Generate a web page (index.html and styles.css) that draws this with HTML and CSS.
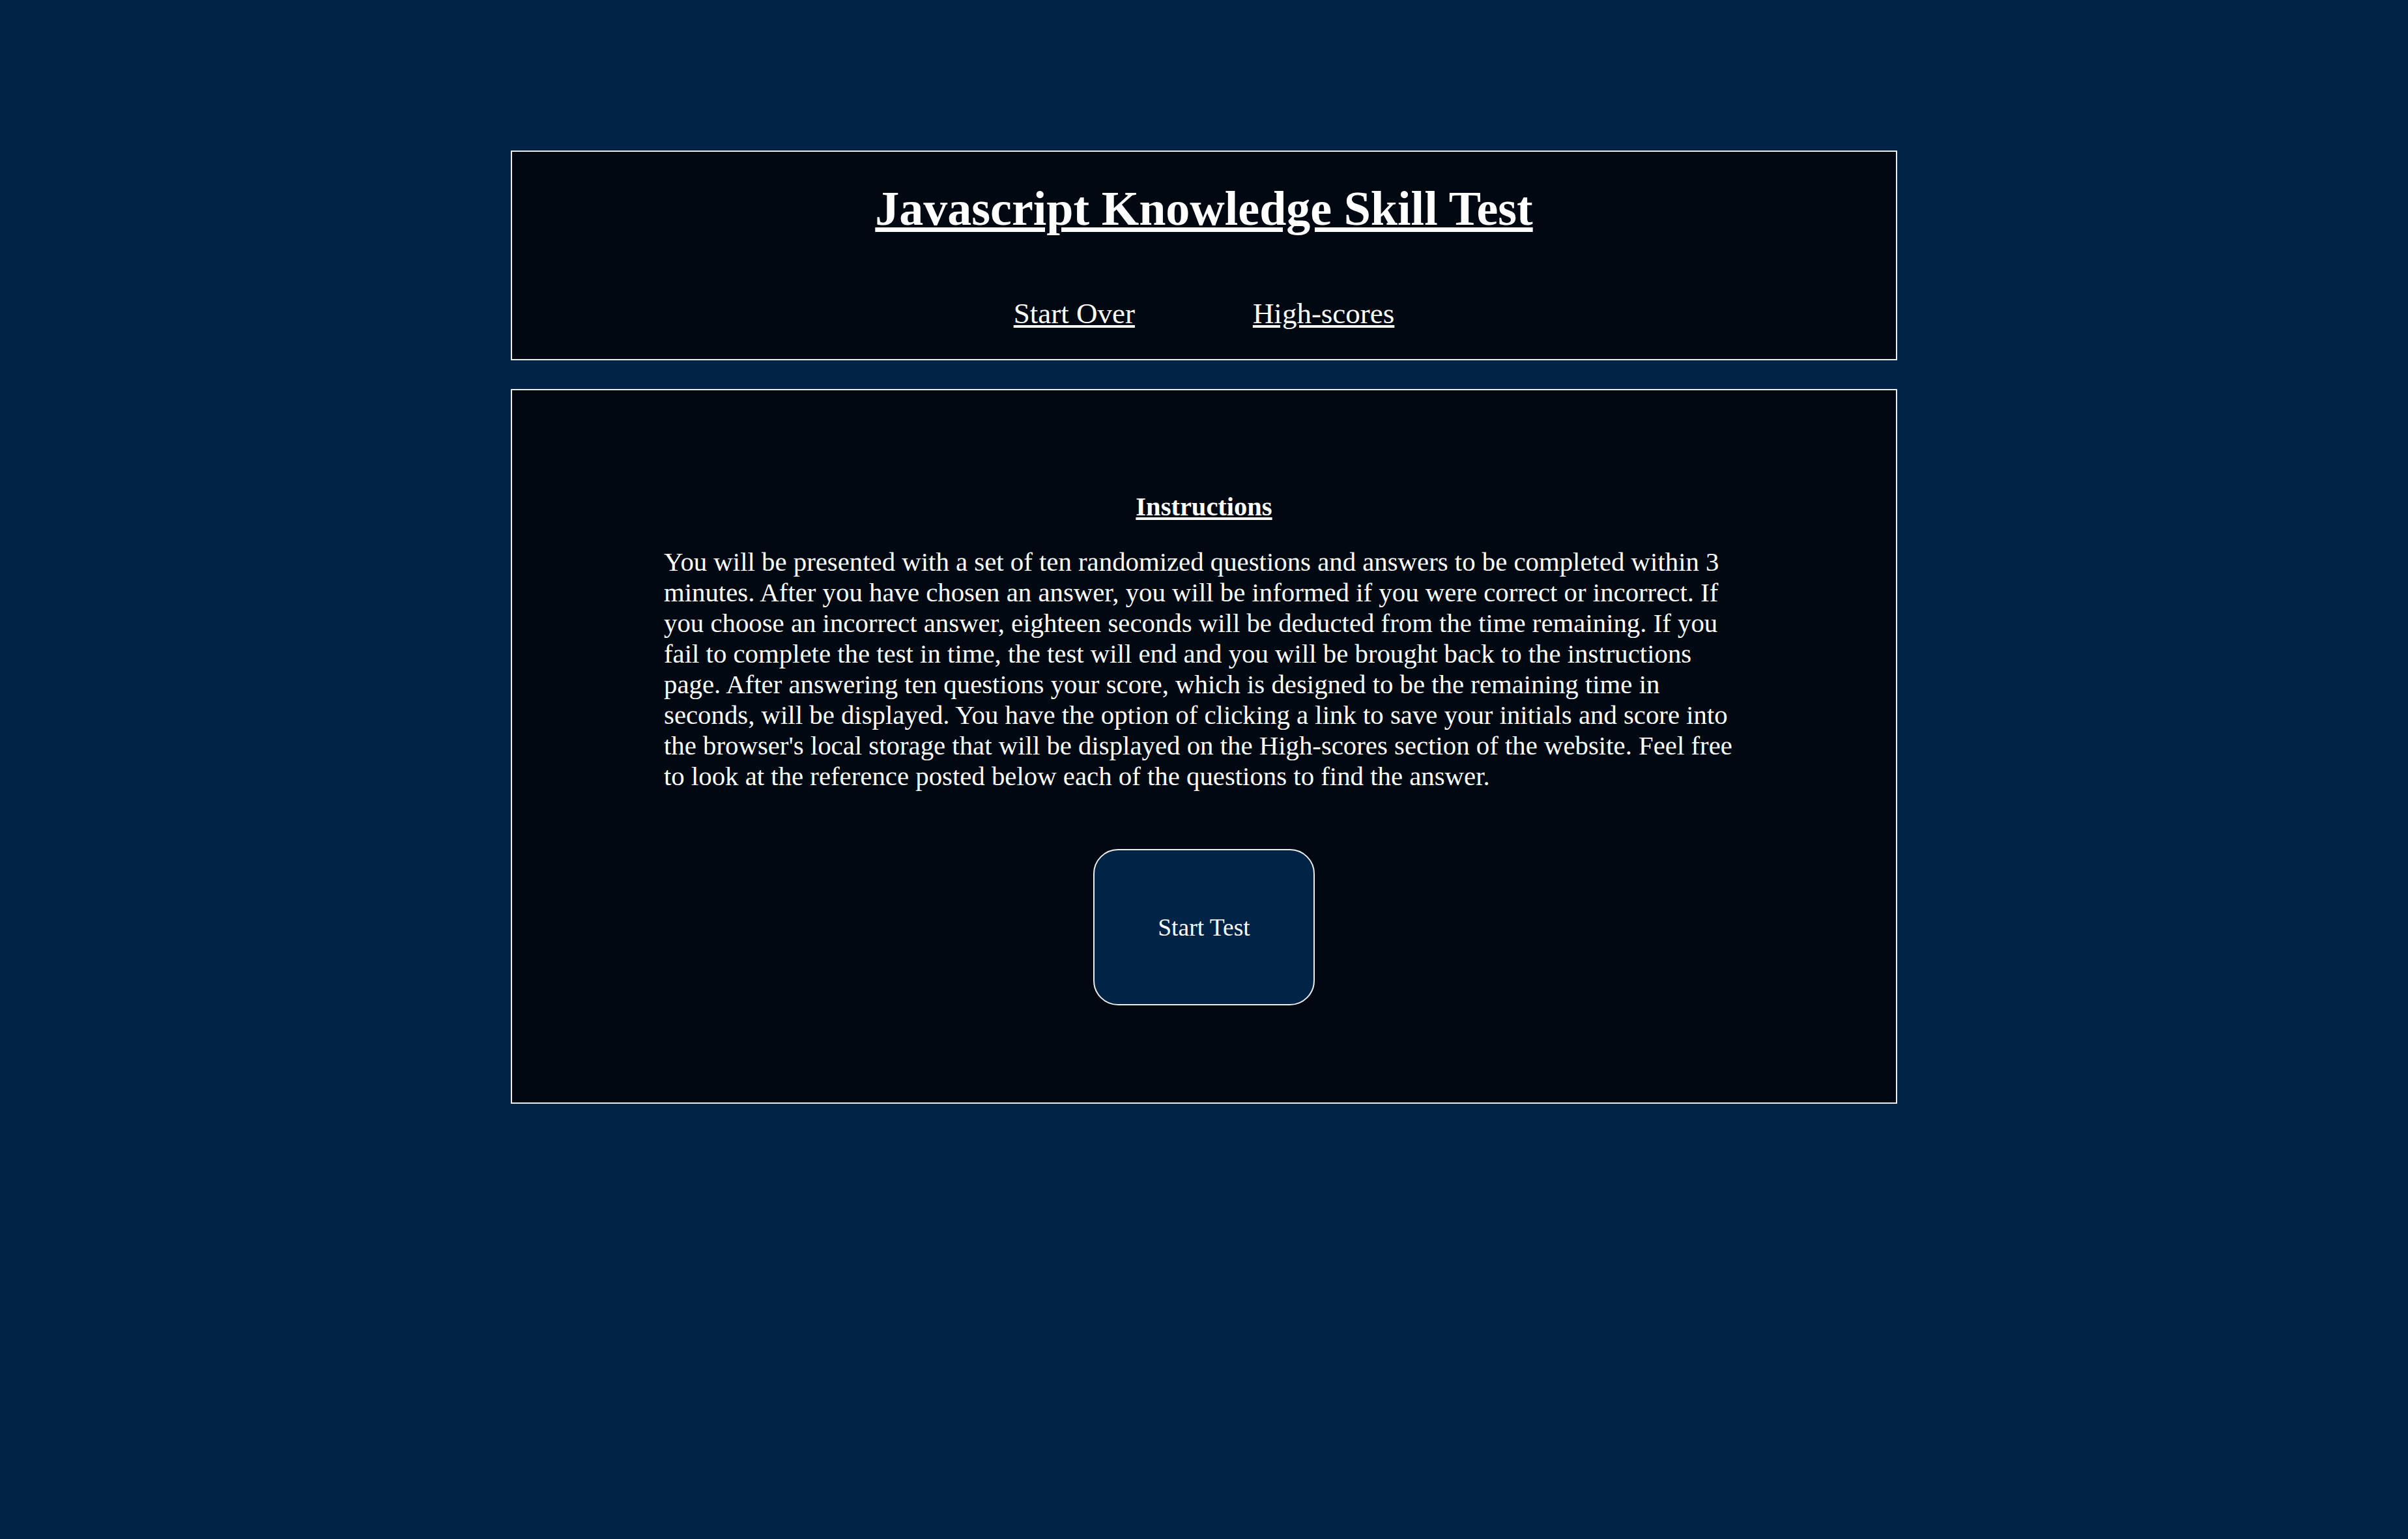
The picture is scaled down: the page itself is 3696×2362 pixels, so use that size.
FILE: index.html
```html
<!DOCTYPE html>
<html lang="en">
<head>
<meta charset="utf-8">
<title>Javascript Knowledge Skill Test</title>
<link rel="stylesheet" href="styles.css">
</head>
<body>
<main class="page">
  <header class="panel header">
    <h1 class="title">Javascript Knowledge Skill Test</h1>
    <nav class="nav">
      <a href="#" class="nav-link">Start Over</a>
      <a href="#" class="nav-link">High-scores</a>
    </nav>
  </header>
  <section class="panel content">
    <h4 class="heading">Instructions</h4>
    <p class="text">You will be presented with a set of ten randomized questions and answers to be completed within 3 minutes. After you have chosen an answer, you will be informed if you were correct or incorrect. If you choose an incorrect answer, eighteen seconds will be deducted from the time remaining. If you fail to complete the test in time, the test will end and you will be brought back to the instructions page. After answering ten questions your score, which is designed to be the remaining time in seconds, will be displayed. You have the option of clicking a link to save your initials and score into the browser's local storage that will be displayed on the High-scores section of the website. Feel free to look at the reference posted below each of the questions to find the answer.</p>
    <div class="actions">
      <button class="start-btn" type="button">Start Test</button>
    </div>
  </section>
</main>
</body>
</html>
```

FILE: styles.css
```css
html, body {
  margin: 0;
  padding: 0;
}

body {
  background: #002346;
  color: #ffffff;
  font-family: "Liberation Serif", "Times New Roman", serif;
}

.page {
  width: 2128px;
  margin: 0 auto;
  padding-top: 231px;
}

.panel {
  box-sizing: border-box;
  border: 2px solid #ececec;
  background: #000912;
}

.header {
  display: flex;
  flex-direction: column;
  align-items: center;
  padding-bottom: 44px;
}

.title {
  margin: 41px 0 0;
  font-size: 74px;
  font-weight: bold;
  line-height: 92px;
  text-decoration: underline;
}

.nav {
  display: flex;
  justify-content: center;
  gap: 181px;
  margin-top: 89px;
  font-size: 45px;
  line-height: normal;
}

.nav-link {
  color: #ffffff;
  text-decoration: underline;
}

.content {
  margin-top: 44px;
  padding: 155px 0 149px;
  display: flex;
  flex-direction: column;
  align-items: center;
}

.heading {
  margin: 0;
  font-size: 40.5px;
  font-weight: bold;
  line-height: 47px;
  text-decoration: underline;
}

.text {
  width: 1658px;
  margin: 38px 0 0;
  font-size: 40.8px;
  line-height: 47px;
}

.actions {
  display: flex;
  justify-content: center;
  margin-top: 88px;
}

.start-btn {
  box-sizing: border-box;
  width: 340px;
  height: 240px;
  display: flex;
  align-items: center;
  justify-content: center;
  background: #002346;
  color: #ffffff;
  border: 2px solid #ececec;
  border-radius: 38px;
  font-family: "Liberation Serif", "Times New Roman", serif;
  font-size: 37.5px;
  padding: 0;
  cursor: pointer;
}
```
